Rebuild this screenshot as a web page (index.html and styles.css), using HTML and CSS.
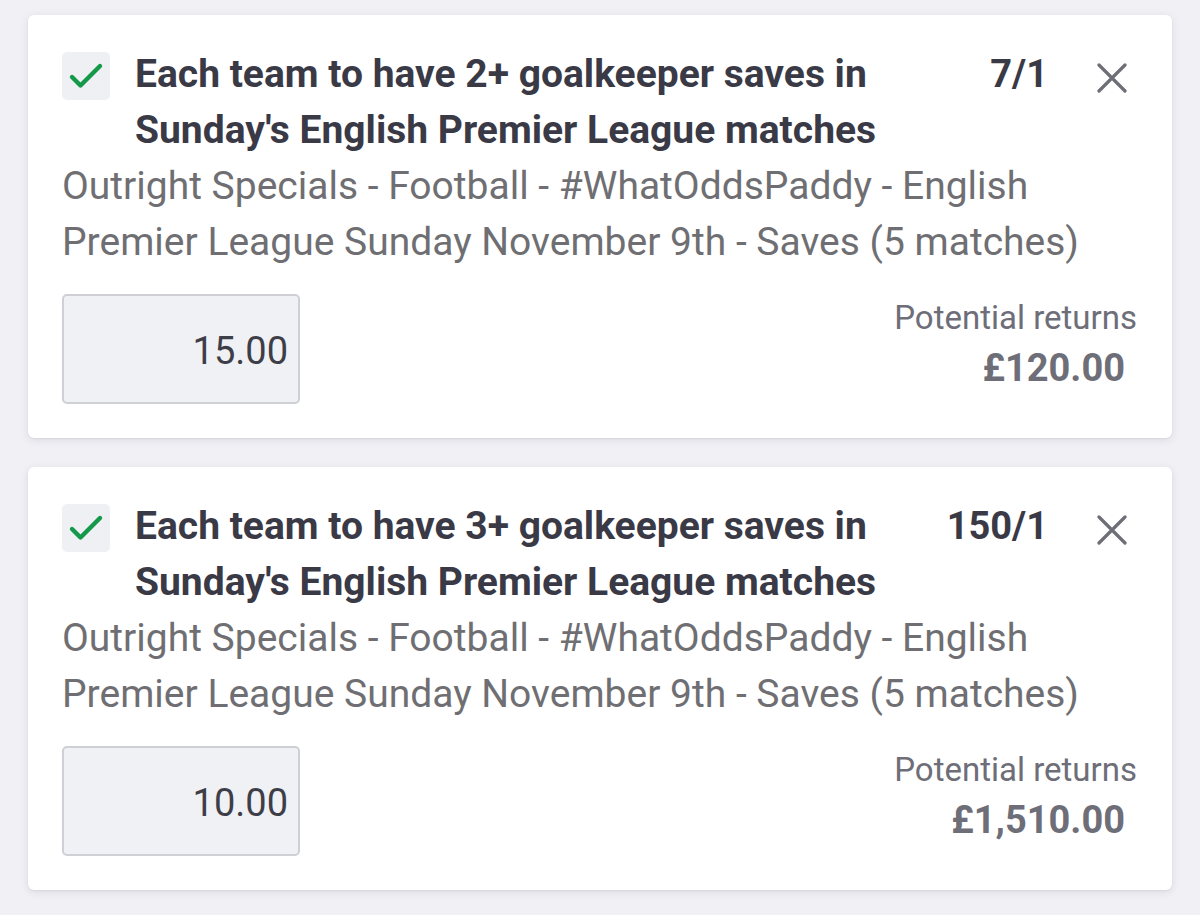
FILE: index.html
```html
<!DOCTYPE html>
<html lang="en">
<head>
<meta charset="utf-8">
<title>Bet slip</title>
<link rel="stylesheet" href="styles.css">
</head>
<body>
<div class="slip">
  <div class="card">
    <div class="head">
      <div class="check">
        <svg width="48" height="48" viewBox="0 0 48 48"><path d="M10 25 L18.5 33.5 L38 14" fill="none" stroke="#14994a" stroke-width="4.4" stroke-linecap="round" stroke-linejoin="round"/></svg>
      </div>
      <div class="title">Each team to have 2+ goalkeeper saves in Sunday's English Premier League matches</div>
      <div class="odds">7/1</div>
      <div class="close">
        <svg width="30" height="30" viewBox="0 0 30 30"><path d="M2 2 L28 28 M28 2 L2 28" stroke="#6e6e76" stroke-width="3.2" stroke-linecap="round"/></svg>
      </div>
    </div>
    <div class="desc">Outright Specials - Football - #WhatOddsPaddy - English Premier League Sunday November 9th - Saves (5 matches)</div>
    <div class="foot">
      <div class="stake">15.00</div>
      <div class="returns">
        <div class="ret-label">Potential returns</div>
        <div class="ret-value">£120.00</div>
      </div>
    </div>
  </div>
  <div class="card">
    <div class="head">
      <div class="check">
        <svg width="48" height="48" viewBox="0 0 48 48"><path d="M10 25 L18.5 33.5 L38 14" fill="none" stroke="#14994a" stroke-width="4.4" stroke-linecap="round" stroke-linejoin="round"/></svg>
      </div>
      <div class="title">Each team to have 3+ goalkeeper saves in Sunday's English Premier League matches</div>
      <div class="odds">150/1</div>
      <div class="close">
        <svg width="30" height="30" viewBox="0 0 30 30"><path d="M2 2 L28 28 M28 2 L2 28" stroke="#6e6e76" stroke-width="3.2" stroke-linecap="round"/></svg>
      </div>
    </div>
    <div class="desc">Outright Specials - Football - #WhatOddsPaddy - English Premier League Sunday November 9th - Saves (5 matches)</div>
    <div class="foot">
      <div class="stake">10.00</div>
      <div class="returns">
        <div class="ret-label">Potential returns</div>
        <div class="ret-value">£1,510.00</div>
      </div>
    </div>
  </div>
</div>
</body>
</html>
```

FILE: styles.css
```css
html, body {
  margin: 0;
  padding: 0;
}
body {
  background: #f0f0f5;
  font-family: Roboto, "Liberation Sans", sans-serif;
  height: 915px;
  overflow: hidden;
}
.slip {
  padding: 15px 28px 0 28px;
  display: flex;
  flex-direction: column;
  gap: 29px;
}
.card {
  background: #ffffff;
  border-radius: 6px;
  box-shadow: 0 2px 8px rgba(40, 40, 60, 0.10), 0 1px 2px rgba(40, 40, 60, 0.06);
  padding: 31px 35px 34px 34px;
  height: 423px;
  box-sizing: border-box;
}
.head {
  display: flex;
  align-items: flex-start;
}
.check {
  width: 48px;
  height: 48px;
  flex: none;
  background: #eff0f4;
  border-radius: 5px;
  margin-top: 6px;
}
.check svg {
  display: block;
}
.title {
  flex: 1;
  margin-left: 25px;
  font-size: 39px;
  line-height: 56px;
  font-weight: 700;
  color: #3a3a47;
}
.odds {
  width: 144px;
  flex: none;
  text-align: right;
  font-size: 38px;
  line-height: 56px;
  font-weight: 700;
  color: #3a3a47;
}
.close {
  flex: none;
  width: 30px;
  height: 30px;
  margin: 17px 10px 0 49px;
}
.close svg {
  display: block;
}
.desc {
  font-size: 39px;
  line-height: 56px;
  color: #6f6f73;
}
.foot {
  display: flex;
  justify-content: space-between;
  align-items: flex-start;
  margin-top: 24px;
}
.stake {
  width: 238px;
  height: 110px;
  box-sizing: border-box;
  background: #f0f1f5;
  border: 2px solid #cfd0d5;
  border-radius: 5px;
  display: flex;
  align-items: center;
  justify-content: flex-end;
  padding-right: 10px;
  padding-top: 3px;
  font-size: 38px;
  color: #3e3e48;
}
.returns {
  text-align: right;
  margin-top: 2px;
  color: #6e6e78;
}
.ret-label {
  font-size: 33px;
  line-height: 44px;
}
.ret-value {
  font-size: 38px;
  line-height: 50px;
  font-weight: 700;
  margin-top: 3px;
  padding-right: 12px;
}
```
